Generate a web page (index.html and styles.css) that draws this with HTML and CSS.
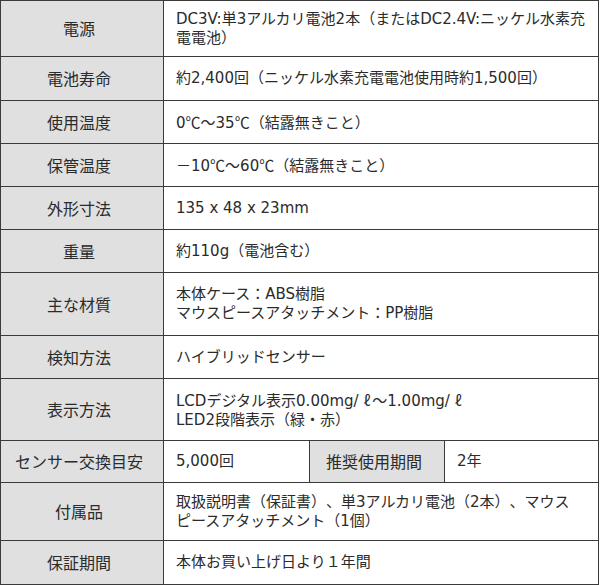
FILE: index.html
```html
<!DOCTYPE html>
<html lang="ja">
<head>
<meta charset="utf-8">
<link rel="stylesheet" href="styles.css">
</head>
<body>
<table class="spec">
  <colgroup><col class="c-label"><col class="c-v1"><col class="c-l2"><col class="c-v2"></colgroup>
  <tr class="r56"><th>電源</th><td colspan="3">DC3V:単3アルカリ電池2本（またはDC2.4V:ニッケル水素充<br>電電池）</td></tr>
  <tr class="r44"><th>電池寿命</th><td colspan="3">約2,400回（ニッケル水素充電電池使用時約1,500回）</td></tr>
  <tr class="r43"><th>使用温度</th><td colspan="3">0<span class="cj">℃～</span>35<span class="cj">℃</span>（結露無きこと）</td></tr>
  <tr class="r43"><th>保管温度</th><td colspan="3">－10<span class="cj">℃～</span>60<span class="cj">℃</span>（結露無きこと）</td></tr>
  <tr class="r43"><th>外形寸法</th><td colspan="3">135 x 48 x 23mm</td></tr>
  <tr class="r43"><th>重量</th><td colspan="3">約110g（電池含む）</td></tr>
  <tr class="r63"><th>主な材質</th><td colspan="3">本体ケース：ABS樹脂<br>マウスピースアタッチメント：PP樹脂</td></tr>
  <tr class="r43"><th>検知方法</th><td colspan="3">ハイブリッドセンサー</td></tr>
  <tr class="r62"><th>表示方法</th><td colspan="3">LCDデジタル表示0.00mg/ <span class="lt">ℓ</span><span class="cj">～</span>1.00mg/ <span class="lt">ℓ</span><br>LED2段階表示（緑・赤）</td></tr>
  <tr class="r42"><th>センサー交換目安</th><td>5,000回</td><th>推奨使用期間</th><td>2年</td></tr>
  <tr class="r58"><th>付属品</th><td colspan="3">取扱説明書（保証書）、単3アルカリ電池（2本）、マウス<br>ピースアタッチメント（1個）</td></tr>
  <tr class="r44"><th>保証期間</th><td colspan="3">本体お買い上げ日より１年間</td></tr>
</table>
</body>
</html>
```
FILE: styles.css
```css
html, body {
  margin: 0;
  padding: 0;
  background: #ffffff;
}
.spec {
  border-collapse: collapse;
  width: 599px;
  table-layout: fixed;
  font-family: "DejaVu Sans", "Noto Sans CJK JP", sans-serif;
  font-size: 15px;
  line-height: 19px;
  color: #2b2b2b;
  text-spacing-trim: space-all;
}
.cj {
  font-family: "Noto Sans CJK JP", sans-serif;
}
.lt {
  font-family: "Noto Sans CJK JP", sans-serif;
  padding-right: 2px;
}
.c-label { width: 163px; }
.c-v1 { width: 146px; }
.c-l2 { width: 135px; }
.c-v2 { width: auto; }
.spec th, .spec td {
  border: 1px solid #3a3a3a;
  padding: 0 12px;
  vertical-align: middle;
}
.spec th {
  background: #e0e0e0;
  font-weight: normal;
  text-align: center;
  padding: 0 6px 0 0;
  font-family: "Noto Sans CJK JP", sans-serif;
  font-size: 16px;
}
.spec td {
  text-align: left;
}
.r56 { height: 56px; }
.r44 { height: 44px; }
.r43 { height: 43px; }
.r42 { height: 42px; }
.r63 { height: 63px; }
.r62 { height: 62px; }
.r58 { height: 58px; }
```
